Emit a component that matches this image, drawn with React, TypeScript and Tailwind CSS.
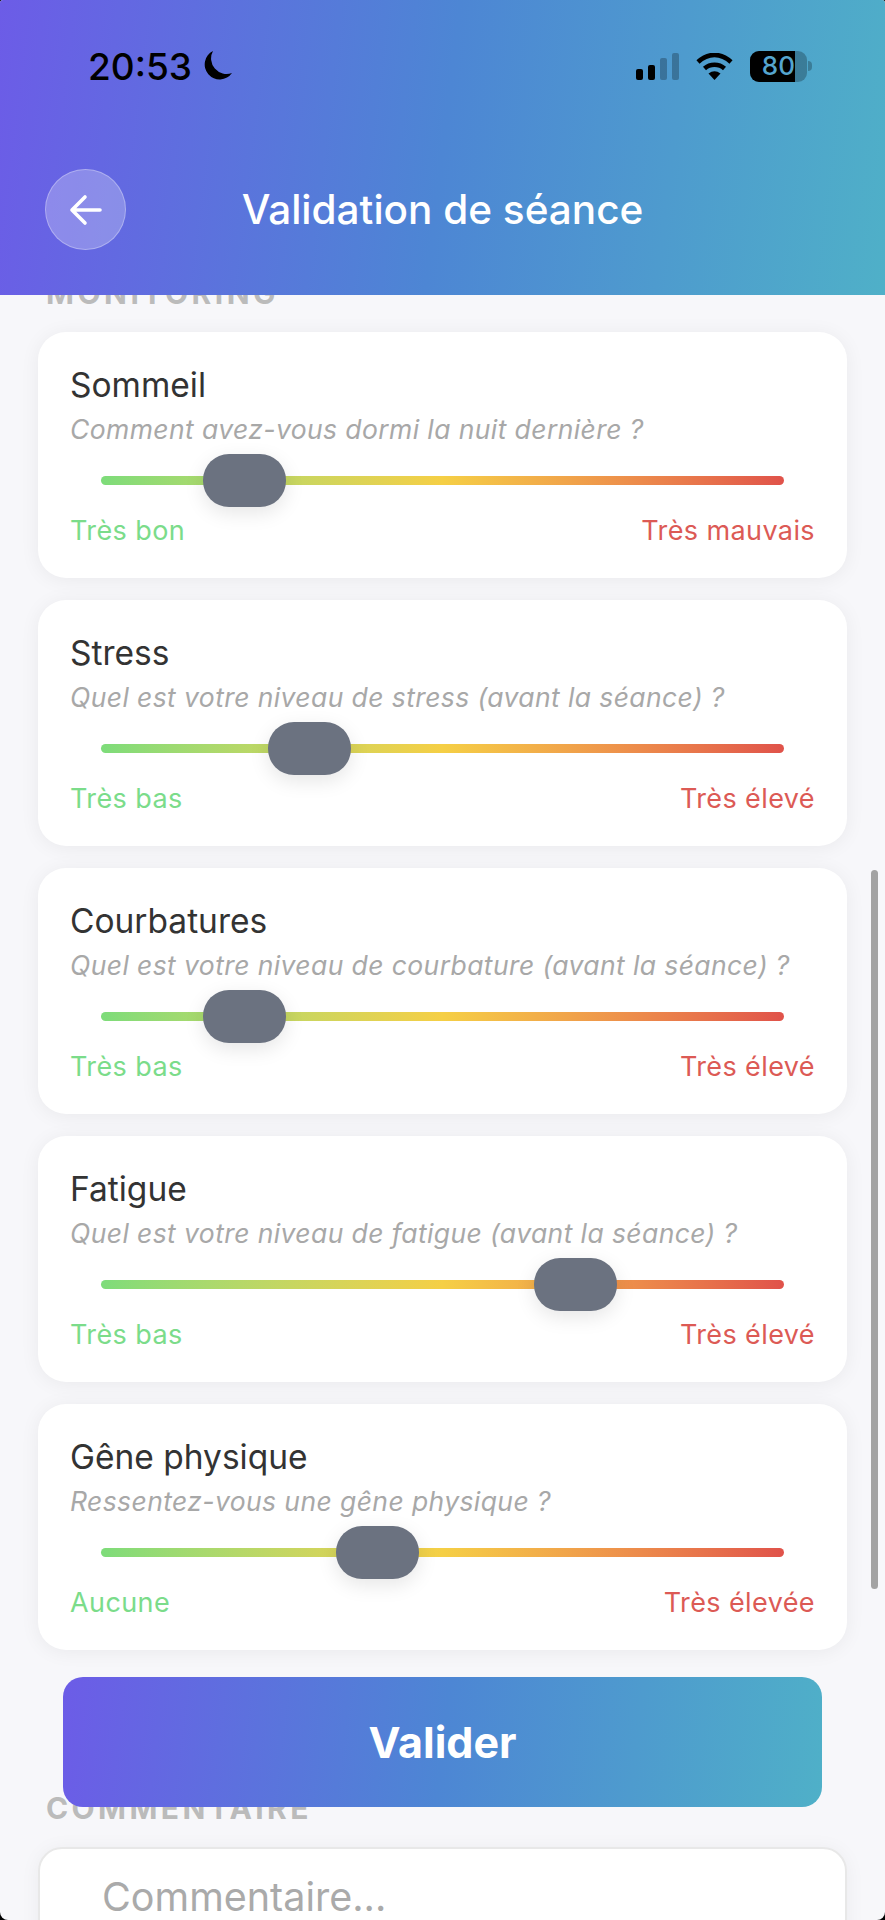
const sliders = [
  { title: 'Sommeil', hint: 'Comment avez-vous dormi la nuit dernière ?', low: 'Très bon', high: 'Très mauvais', thumb: 101 },
  { title: 'Stress', hint: 'Quel est votre niveau de stress (avant la séance) ?', low: 'Très bas', high: 'Très élevé', thumb: 166 },
  { title: 'Courbatures', hint: 'Quel est votre niveau de courbature (avant la séance) ?', low: 'Très bas', high: 'Très élevé', thumb: 101 },
  { title: 'Fatigue', hint: 'Quel est votre niveau de fatigue (avant la séance) ?', low: 'Très bas', high: 'Très élevé', thumb: 432 },
  { title: 'Gêne physique', hint: 'Ressentez-vous une gêne physique ?', low: 'Aucune', high: 'Très élevée', thumb: 234 },
];

function SliderCard({ title, hint, low, high, thumb }: (typeof sliders)[number]) {
  return (
    <div className="h-[246px] rounded-[28px] bg-white px-[32px] pt-[33px] shadow-[0_2px_20px_rgba(0,0,0,0.06)]">
      <h3 className="text-[33.5px] leading-[41px] text-[#333333]">{title}</h3>
      <p className="mt-[3px] text-[26.5px] leading-[40px] tracking-[0.4px] italic text-[#a8a8a8] whitespace-nowrap">{hint}</p>
      <div className="relative mx-[31px] mt-[27px] h-[9px] rounded-full bg-gradient-to-r from-[#7ddc7a] via-[#f5cf45] to-[#e0524a]">
        <div
          className="absolute top-[-22px] h-[53px] w-[83px] rounded-[26px] bg-[#6b7280] shadow-[0_6px_20px_rgba(0,0,0,0.1)]"
          style={{ left: thumb + 1 }}
        />
      </div>
      <div className="mt-[27px] flex justify-between text-[27px] leading-[37px] tracking-[0.4px]">
        <span className="text-[#7bdc8a]">{low}</span>
        <span className="text-[#dc5a55]">{high}</span>
      </div>
    </div>
  );
}

function StatusBar() {
  return (
    <div className="flex h-[68px] items-center justify-between pl-[88px] pr-[73px] text-black">
      <div className="flex items-center gap-[9px]">
        <span className="text-[37px] font-medium leading-none">20:53</span>
        <svg width="32" height="32" viewBox="0 0 32 32"><path d="M12 1 A15 15 0 1 0 31 23 A15.5 15.5 0 0 1 12 1 Z" fill="#000" /></svg>
      </div>
      <div className="flex items-center gap-[17px]">
        <div className="flex items-end gap-[4.5px]">
          <div className="h-[11px] w-[7.5px] rounded-[2px] bg-black" />
          <div className="h-[15px] w-[7.5px] rounded-[2px] bg-black" />
          <div className="h-[22px] w-[7.5px] rounded-[2px] bg-black/25" />
          <div className="h-[27px] w-[7.5px] rounded-[2px] bg-black/25" />
        </div>
        <svg width="37" height="27" viewBox="0 0 37 27" fill="none" stroke="#000" strokeWidth="4.5">
          <path d="M2 9 C12 -0.5 25 -0.5 35 9" />
          <path d="M8.5 15.5 C14 10.5 23 10.5 28.5 15.5" />
          <path d="M12.5 20.5 Q18.5 16 24.5 20.5 L18.5 27 Z" fill="#000" stroke="none" />
        </svg>
        <div className="flex items-center">
          <div className="flex h-[31px] w-[57px] overflow-hidden rounded-[9px] bg-black/25">
            <div className="flex h-full w-[45px] items-center justify-end bg-black text-[26px] font-medium leading-none text-[#55a5cf]">80</div>
          </div>
          <div className="ml-[1px] h-[10px] w-[4px] rounded-r-full bg-black/25" />
        </div>
      </div>
    </div>
  );
}

export default function App() {
  return (
    <div className="h-[1920px] w-[885px] bg-black">
      <div className="relative h-[1920px] w-[885px] overflow-hidden rounded-t-[3px] rounded-b-[8px] bg-[#f7f7fa] font-['Inter',sans-serif]">
        {/* Header */}
        <header className="relative z-10 h-[295px] bg-[linear-gradient(97deg,#6c5ce7,#4d86d4_50%,#4fb0c8)] pt-[32px]">
          <StatusBar />
          <div className="relative mt-[69px] flex h-[81px] items-center justify-center">
            <button className="absolute left-[45px] flex h-[81px] w-[81px] items-center justify-center rounded-full border border-white/30 bg-white/25">
              <svg width="34" height="34" viewBox="0 0 34 34" fill="none" stroke="#fff" strokeWidth="3.6" strokeLinecap="round" strokeLinejoin="round">
                <path d="M31 17 H3 M16 4 L3 17 L16 30" />
              </svg>
            </button>
            <h1 className="pt-[2px] text-[40.5px] font-medium leading-none text-white">Validation de séance</h1>
          </div>
        </header>

        {/* Scrolled content */}
        <main className="mt-[-19px] px-[38px]">
          <p className="ml-[8px] h-[34px] text-[30px] font-bold uppercase leading-[34px] tracking-[3.5px] text-[#bbbbbb]">Monitoring</p>
          <div className="mt-[22px] flex flex-col gap-[22px]">
            {sliders.map((s) => (
              <SliderCard key={s.title} {...s} />
            ))}
          </div>
          <p className="ml-[8px] mt-[141px] h-[34px] text-[30px] font-bold uppercase leading-[34px] tracking-[3.4px] text-[#bbbbbb]">Commentaire</p>
          <div className="mt-[22px] h-[160px] rounded-[24px] border-2 border-[#e8e8e8] bg-white px-[62px] pt-[24px] shadow-[0_2px_20px_rgba(0,0,0,0.05)]">
            <span className="text-[39.5px] leading-[48px] text-[#aaaaaa]">Commentaire...</span>
          </div>
        </main>

        {/* Floating button and scroll indicator */}
        <button className="absolute left-[63px] top-[1677px] h-[130px] w-[759px] rounded-[20px] bg-[linear-gradient(97deg,#6c5ce7,#4d86d4_50%,#4fb0c8)] text-[43px] font-bold text-white">
          Valider
        </button>
        <div className="absolute left-[871px] top-[870px] h-[719px] w-[7px] rounded-full bg-[#a3a3a3]" />
      </div>
    </div>
  );
}
